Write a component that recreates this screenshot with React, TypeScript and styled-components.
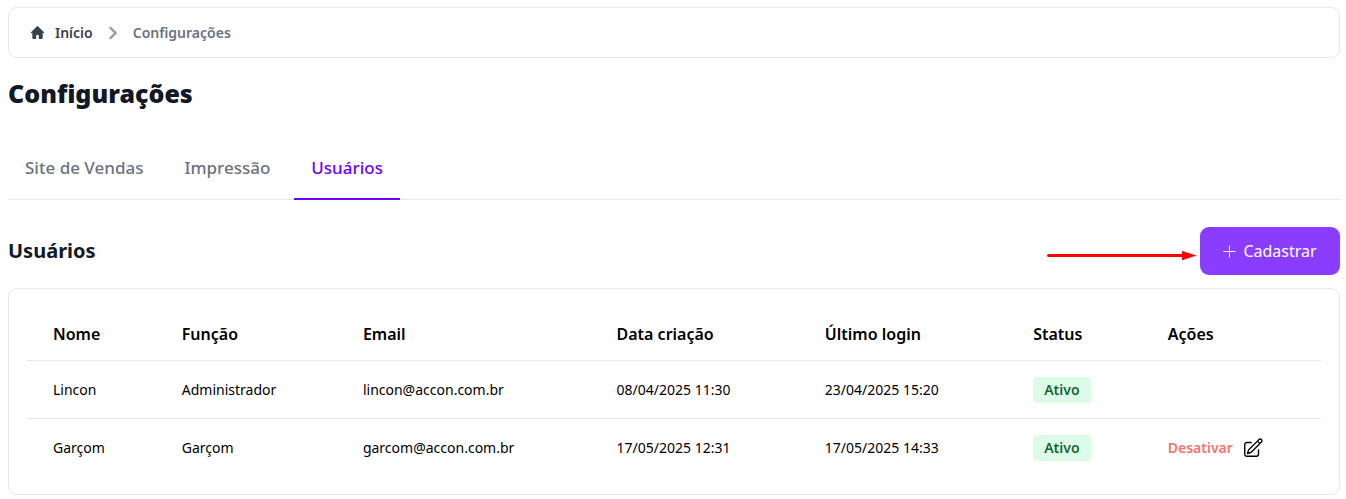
import React from "react";
import styled, { createGlobalStyle } from "styled-components";

const GlobalStyle = createGlobalStyle`
  * { box-sizing: border-box; }
  body {
    margin: 0;
    background: #fff;
    color: #000;
    font-family: "Segoe UI", "Noto Sans", "Open Sans", sans-serif;
  }
  h1, h2 { margin: 0; }
`;

const Page = styled.main`
  padding: 7px 6px 4px 8px;
`;

const Breadcrumb = styled.nav`
  display: flex;
  align-items: center;
  gap: 7px;
  height: 51px;
  padding: 0 22px;
  border: 1px solid #e5e7eb;
  border-radius: 9px;
  font-size: 14px;
  line-height: 20px;
  font-weight: 600;
  color: #6b7280;
`;

const HomeLink = styled.a`
  display: flex;
  align-items: center;
  gap: 11px;
  color: #374151;
  text-decoration: none;
`;

const Title = styled.h1`
  margin-top: 17px;
  font-size: 25px;
  line-height: 36px;
  font-weight: 900;
  color: #111827;
`;

const Tabs = styled.div`
  display: flex;
  gap: 7px;
  margin-top: 25px;
  border-bottom: 1px solid #e5e7eb;
`;

const Tab = styled.button<{ $active?: boolean }>`
  height: 64px;
  margin-bottom: -1px;
  padding: 0 17px;
  border: 0;
  border-bottom: 2px solid ${(p) => (p.$active ? "#6f00ff" : "transparent")};
  background: none;
  color: ${(p) => (p.$active ? "#6f00ff" : "#6b7280")};
  font: inherit;
  font-size: 17px;
  font-weight: 500;
  cursor: pointer;
`;

const SectionHeader = styled.header`
  display: flex;
  align-items: center;
  justify-content: space-between;
  margin-top: 27px;
`;

const SectionTitle = styled.h2`
  font-size: 20px;
  line-height: 28px;
  font-weight: 700;
  color: #111827;
`;

const Action = styled.div`
  position: relative;
`;

const Arrow = styled.svg`
  position: absolute;
  right: 143px;
  top: 22px;
`;

const PrimaryButton = styled.button`
  display: flex;
  align-items: center;
  justify-content: center;
  gap: 7px;
  width: 140px;
  height: 48px;
  border: 0;
  border-radius: 9px;
  background: #8b3dff;
  color: #fff;
  font: inherit;
  font-size: 16px;
  white-space: nowrap;
  cursor: pointer;
`;

const Card = styled.section`
  margin-top: 13px;
  padding: 18px 18px 17px;
  border: 1px solid #e5e7eb;
  border-radius: 9px;
`;

const Table = styled.table`
  width: 100%;
  table-layout: fixed;
  border-collapse: separate;
  border-spacing: 0;
  text-align: left;
`;

const Th = styled.th<{ $share: number }>`
  width: ${(p) => p.$share}%;
  height: 54px;
  padding: 0 0 0 26px;
  border-bottom: 1px solid #e5e7eb;
  font-size: 16px;
  font-weight: 600;
  white-space: nowrap;
`;

const Td = styled.td`
  height: 58px;
  padding: 0 0 0 26px;
  border-bottom: 1px solid #e5e7eb;
  font-size: 14px;
  line-height: 20px;
  white-space: nowrap;

  tr:last-child > & { border-bottom: 0; }
`;

const Badge = styled.span`
  display: inline-block;
  padding: 3px 11px;
  border-radius: 4px;
  background: #dcfce7;
  color: #166534;
  font-weight: 600;
`;

const Actions = styled.div`
  display: flex;
  align-items: center;
  gap: 9px;
`;

const PlainButton = styled.button`
  display: flex;
  padding: 0;
  border: 0;
  background: none;
  color: #000;
  cursor: pointer;
`;

const DangerButton = styled(PlainButton)`
  color: #f87171;
  font: inherit;
  font-weight: 600;
`;

const columns = [
  { label: "Nome", share: 9.95 },
  { label: "Função", share: 14 },
  { label: "Email", share: 19.6 },
  { label: "Data criação", share: 16.1 },
  { label: "Último login", share: 16.1 },
  { label: "Status", share: 10.4 },
  { label: "Ações", share: 13.85 },
];

const users = [
  { name: "Lincon", role: "Administrador", email: "lincon@accon.com.br", created: "08/04/2025 11:30", login: "23/04/2025 15:20", editable: false },
  { name: "Garçom", role: "Garçom", email: "garcom@accon.com.br", created: "17/05/2025 12:31", login: "17/05/2025 14:33", editable: true },
];

const HomeIcon = () => (
  <svg width="13" height="13" viewBox="0 0 20 20" fill="currentColor" aria-hidden="true">
    <path d="m19.707 9.293-2-2-7-7a1 1 0 0 0-1.414 0l-7 7-2 2a1 1 0 0 0 1.414 1.414L2 10.414V18a2 2 0 0 0 2 2h3a1 1 0 0 0 1-1v-4a1 1 0 0 1 1-1h2a1 1 0 0 1 1 1v4a1 1 0 0 0 1 1h3a2 2 0 0 0 2-2v-7.586l.293.293a1 1 0 0 0 1.414-1.414Z" />
  </svg>
);

const ChevronIcon = () => (
  <svg width="26" height="26" viewBox="0 0 20 20" fill="#9ca3af" aria-hidden="true">
    <path d="M7.293 14.707a1 1 0 010-1.414L10.586 10 7.293 6.707a1 1 0 011.414-1.414l4 4a1 1 0 010 1.414l-4 4a1 1 0 01-1.414 0z" />
  </svg>
);

const PlusIcon = () => (
  <svg width="13" height="13" viewBox="0 0 13 13" stroke="currentColor" aria-hidden="true">
    <path d="M6.5 0.5v12M0.5 6.5h12" />
  </svg>
);

const EditIcon = () => (
  <svg width="22" height="22" viewBox="0 0 24 24" fill="none" stroke="currentColor" strokeWidth="1.5" strokeLinecap="round" strokeLinejoin="round" aria-hidden="true">
    <path d="m16.862 4.487 1.687-1.688a1.875 1.875 0 1 1 2.652 2.652L10.582 16.07a4.5 4.5 0 0 1-1.897 1.13L6 18l.8-2.685a4.5 4.5 0 0 1 1.13-1.897l8.932-8.931Zm0 0L19.5 7.125M18 14v4.75A2.25 2.25 0 0 1 15.75 21H5.25A2.25 2.25 0 0 1 3 18.75V8.25A2.25 2.25 0 0 1 5.25 6H10" />
  </svg>
);

export default function App() {
  return (
    <>
      <GlobalStyle />
      <Page>
        <Breadcrumb aria-label="Navegação">
          <HomeLink href="#inicio">
            <HomeIcon />
            Início
          </HomeLink>
          <ChevronIcon />
          <span>Configurações</span>
        </Breadcrumb>
        <Title>Configurações</Title>
        <Tabs role="tablist">
          <Tab role="tab" aria-selected={false}>Site de Vendas</Tab>
          <Tab role="tab" aria-selected={false}>Impressão</Tab>
          <Tab role="tab" aria-selected $active>Usuários</Tab>
        </Tabs>
        <SectionHeader>
          <SectionTitle>Usuários</SectionTitle>
          <Action>
            <Arrow width="150" height="12" viewBox="0 0 150 12" aria-hidden="true">
              <path d="M1.5 6.5H138" stroke="#f00" strokeWidth="3" strokeLinecap="round" />
              <path d="M135 2v9.200L149.500 6.500Z" fill="#f00" />
            </Arrow>
            <PrimaryButton>
              <PlusIcon />
              Cadastrar
            </PrimaryButton>
          </Action>
        </SectionHeader>
        <Card>
          <Table>
            <thead>
              <tr>
                {columns.map((c) => (
                  <Th key={c.label} scope="col" $share={c.share}>{c.label}</Th>
                ))}
              </tr>
            </thead>
            <tbody>
              {users.map((u) => (
                <tr key={u.name}>
                  <Td>{u.name}</Td>
                  <Td>{u.role}</Td>
                  <Td>{u.email}</Td>
                  <Td>{u.created}</Td>
                  <Td>{u.login}</Td>
                  <Td><Badge>Ativo</Badge></Td>
                  <Td>
                    {u.editable && (
                      <Actions>
                        <DangerButton>Desativar</DangerButton>
                        <PlainButton aria-label="Editar"><EditIcon /></PlainButton>
                      </Actions>
                    )}
                  </Td>
                </tr>
              ))}
            </tbody>
          </Table>
        </Card>
      </Page>
    </>
  );
}
